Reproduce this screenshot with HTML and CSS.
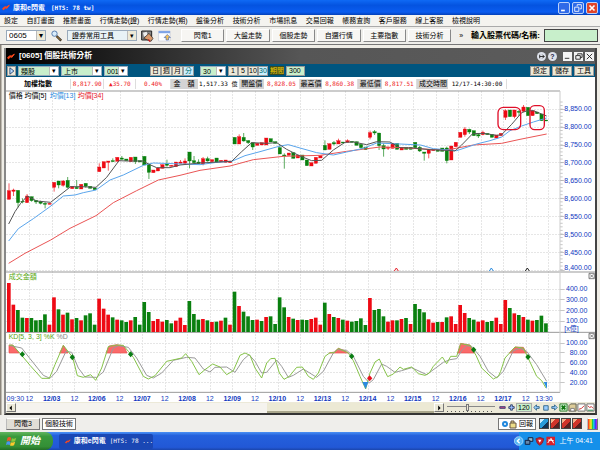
FILE: index.html
```html
<!DOCTYPE html>
<html lang="zh-Hant">
<head>
<meta charset="utf-8">
<title>康和e閃電</title>
<link rel="stylesheet" href="styles.css">
</head>
<body>
<header class="titlebar">
  <svg class="bolt" viewBox="0 0 24 20"><path d="M2 13 L10 7 L11 10 L22 3 L14 13 L12 10 L4 17 Z"/></svg>
  <h1>康和e閃電<span class="code">[HTS: 78 tw]</span></h1>
  <div class="winbtns">
    <button type="button" aria-label="最小化"><svg viewBox="0 0 12 12"><path d="M2.500 9H7"/></svg></button>
    <button type="button" aria-label="還原"><svg viewBox="0 0 12 12"><path class="thin" d="M5 4V2H10V7H8M2 5H7V10H2Z"/></svg></button>
    <button type="button" class="close" aria-label="關閉"><svg viewBox="0 0 12 12"><path d="M3 3L9 9M9 3L3 9"/></svg></button>
  </div>
</header>
<nav class="menubar">
  <a href="#">設定</a><a href="#">自訂畫面</a><a href="#">推薦畫面</a><a href="#">行情走勢(證)</a><a href="#">行情走勢(期)</a><a href="#">盤後分析</a><a href="#">技術分析</a><a href="#">市場訊息</a><a href="#">交易回報</a><a href="#">帳務查詢</a><a href="#">客戶服務</a><a href="#">線上客服</a><a href="#">檢視說明</a>
</nav>
<div class="toolbar">
  <span class="combo code-box"><select aria-label="代碼"><option>0605</option></select></span>
  <button type="button" class="ico" aria-label="查詢"><svg viewBox="0 0 36 36"><path d="M18 18L32 32" stroke="#222" stroke-width="7"/><path d="M19 19L31 31" stroke="#d99a3c" stroke-width="3"/><circle cx="12" cy="11" r="8" fill="#d8ecfb" stroke="#5a7fae" stroke-width="3"/></svg></button>
  <span class="combo tools"><select aria-label="工具"><option>證券常用工具</option></select></span>
  <button type="button" class="ico" aria-label="繪圖"><svg viewBox="0 0 39 36"><path d="M2 3H32V30H2Z" fill="#888" stroke="#222" stroke-width="3"/><path d="M6 8L17 5L20 16L9 20Z" fill="#eee"/><path d="M8 25L24 10L36 25L30 34Z" fill="#d99a6c" stroke="#222" stroke-width="2"/><path d="M22 28L27 35" stroke="#c22" stroke-width="4"/></svg></button>
  <button type="button" class="ico" aria-label="視窗"><svg viewBox="0 0 42 36"><path d="M2 2H39V34H2Z" fill="#fff" stroke="#8894b8"/><path d="M2 2H39V9H2Z" fill="#7fa4e6"/><path d="M30 13L40 23H34V31H26V23H20Z" fill="#f5c258" stroke="#3d62b5" stroke-width="2"/></svg></button>
  <div class="quick">
    <button type="button">閃電1</button><button type="button">大盤走勢</button><button type="button">個股走勢</button><button type="button">自選行情</button><button type="button">主要指數</button><button type="button">技術分析</button>
  </div>
  <span class="more">»</span>
  <label class="find" for="stock">輸入股票代碼/名稱:</label>
  <input id="stock" class="stock" type="text">
</div>

<main class="workspace">
  <section class="chartwin">
    <header class="wintitle">
      <svg class="bolt" viewBox="0 0 24 20"><path d="M2 13 L10 7 L11 10 L22 3 L14 13 L12 10 L4 17 Z"/></svg>
      <h2>[0605] 個股技術分析</h2>
      <button type="button" class="round" aria-label="鎖定"><svg viewBox="0 0 10 10"><path d="M3 5H8M6 3L8 5L6 7M3 3V7"/></svg></button>
      <button type="button" class="round">?</button>
      <button type="button" class="sq first" aria-label="最小化"><svg viewBox="0 0 10 10"><path d="M2 7H7"/></svg></button>
      <button type="button" class="sq" aria-label="還原"><svg viewBox="0 0 10 10"><path d="M4 3V2H9V6H7M2 4H7V8H2Z"/></svg></button>
      <button type="button" class="sq" aria-label="關閉"><svg viewBox="0 0 10 10"><path d="M2 2L8 8M8 2L2 8"/></svg></button>
    </header>
    <div class="options">
      <button type="button" class="play" aria-label="播放"><svg viewBox="0 0 8 10"><path d="M2 1L7 5L2 9Z"/></svg></button>
      <span class="combo green"><select aria-label="類別"><option>類股</option></select></span>
      <span class="combo green"><select aria-label="市場"><option>上市</option></select></span>
      <span class="combo green small"><select aria-label="代號"><option>001</option></select></span>
      <div class="period">
        <button type="button">日</button><button type="button">週</button><button type="button">月</button><button type="button" class="on">分</button>
      </div>
      <span class="combo green mins"><select aria-label="分鐘"><option>30</option></select></span>
      <div class="steps">
        <button type="button">1</button><button type="button">5</button><button type="button">10</button><button type="button" class="on">30</button>
      </div>
      <label class="span" for="span">期間</label>
      <input id="span" class="spanbox" type="text" value="300">
      <div class="actions">
        <button type="button">設定</button><button type="button">儲存</button><button type="button">工具</button>
      </div>
    </div>
    <div class="quote">
      <b>加權指數</b><span class="num up">8,817.90</span><span class="num up">▲35.70</span><span class="num up">0.40%</span>
      <span class="cap">金　額</span><span class="num">1,517.33 億</span>
      <span class="cap">開盤價</span><span class="num up">8,828.05</span>
      <span class="cap">最高價</span><span class="num up">8,860.38</span>
      <span class="cap">最低價</span><span class="num up">8,817.51</span>
      <span class="cap">成交時間</span><span class="num">12/17-14:30:00</span>
    </div>
    <svg class="chart" viewBox="18 270 1767 936" role="img" aria-label="技術分析圖">
      <g id="grid"></g>
      <g class="frame">
        <path d="M18 273H1680M18 816H1785M18 997H1785M18 1177H1680"/>
        <path class="edge" d="M1680 273V1177"/>
      </g>
      <text class="legend" x="26" y="295">價格 均價[5] <tspan fill="#2a8be0" x="149">均價[13]</tspan> <tspan fill="#e8202a" x="233">均價[34]</tspan></text>
      <g transform="translate(0 270)">
        <g id="candles"></g>
        <polyline class="ma34" points="26,520 75,490 152,450 210,415 288,377 340,338 410,302 475,270 540,256 600,241 690,228 760,209 850,199 960,196 1040,184 1140,171 1200,173 1290,178 1340,180 1420,165 1505,160 1560,148 1640,132"/>
        <polyline class="ma13" points="26,453 55,416 100,386 150,350 190,318 225,315 250,308 288,300 330,270 370,255 430,226 460,219 520,221 600,224 650,217 695,214 735,197 780,185 840,168 865,164 900,174 950,188 1000,195 1040,186 1090,175 1130,159 1200,162 1262,165 1300,176 1370,182 1430,162 1470,152 1505,141 1530,122 1565,108 1600,96 1640,84"/>
        <polyline class="ma5" points="26,402 45,365 62,340 82,318 110,333 152,337 180,315 212,290 240,290 288,292 320,262 357,212 380,213 430,213 445,222 470,233 510,233 540,225 600,219 695,214 725,185 755,158 800,160 830,158 860,178 900,198 935,212 965,211 1000,180 1035,157 1060,156 1100,164 1130,155 1170,156 1200,173 1240,174 1290,179 1340,181 1365,183 1385,165 1418,131 1450,130 1490,136 1505,134 1535,103 1565,68 1580,63 1600,62 1620,70 1640,78"/>
        <rect class="ring" x="1494" y="52" width="68" height="67" rx="16"/>
        <rect class="ring" x="1590" y="47" width="43" height="72" rx="14"/>
        <path class="tick" stroke="#e8202a" d="M1183 543l6 -9l6 9"/>
        <path class="tick" stroke="#2a8be0" d="M1468 543l6 -9l6 9"/>
        <path class="tick" stroke="#222" d="M1576 543l6 -9l6 9"/>
      </g>
      <text class="legend" x="26" y="837" fill="#5aa810">成交金額</text>
      <g id="volume"></g>
      <text class="legend" x="26" y="1018" fill="#5aa810">KD[5, 3, 3] %K <tspan fill="#888">%D</tspan></text>
      <g transform="translate(0 804)">
        <path class="hot" d="M27 255V231H38L58 255ZM179 255L190 232L204 255ZM318 255L327 234L350 230L372 234L381 255ZM988 255L1003 252L1015 241L1032 247L1045 255ZM1373 255L1382 226L1410 231L1424 255ZM1528 255L1545 237L1570 238L1580 255Z"/>
        <polyline class="d" points="27,232 65,240 90,272 130,322 150,331 170,310 198,250 215,253 235,300 255,327 290,328 310,312 340,240 355,233 385,238 410,270 440,322 460,330 485,315 520,277 560,268 585,270 610,303 630,312 645,298 680,297 705,313 730,275 747,260 765,280 785,315 800,313 830,276 845,295 865,328 880,322 910,303 950,328 970,310 1000,255 1012,245 1040,247 1060,265 1090,325 1108,345 1120,335 1145,288 1160,295 1185,313 1205,308 1235,299 1280,320 1330,283 1350,275 1370,272 1385,248 1400,233 1415,235 1440,265 1465,310 1490,330 1510,310 1540,248 1560,241 1580,250 1610,290 1640,340"/>
        <polyline class="k" points="27,232 38,231 65,262 90,292 125,331 148,331 165,290 190,232 218,268 232,323 250,328 272,320 287,337 305,300 325,236 350,231 370,232 385,250 400,268 430,325 445,333 465,323 500,280 545,270 557,257 575,280 597,320 615,305 638,288 660,297 680,320 700,308 720,262 735,255 750,262 765,300 785,330 800,285 812,272 825,271 838,315 852,334 868,325 890,298 907,297 925,325 940,334 955,315 975,265 990,254 1003,254 1015,241 1045,255 1060,278 1080,325 1097,363 1110,315 1125,282 1138,273 1150,300 1163,326 1180,318 1200,297 1210,304 1235,297 1255,317 1275,322 1288,315 1300,295 1327,267 1340,287 1352,265 1370,265 1382,227 1410,232 1428,262 1445,300 1480,333 1495,325 1502,310 1515,270 1545,237 1570,240 1590,282 1610,325 1625,338 1638,360"/>
        <path fill="#0a7d14" d="M67 250l8 9l-8 9l-8 -9ZM217 259l8 9l-8 9l-8 -9ZM392 250l8 9l-8 9l-8 -9ZM1055 256l8 9l-8 9l-8 -9ZM1421 236l8 9l-8 9l-8 -9ZM1584 258l8 9l-8 9l-8 -9Z"/>
        <path fill="#e81020" d="M1109 322l8 9l-8 9l-8 -9Z"/>
        <path fill="#2a8be0" d="M1087 342H1105L1097 363ZM1631 342H1641V363Z"/>
      </g>
      <g class="shut">
        <path d="M1767 820h16v16h-16ZM1770 823l10 10M1780 823l-10 10M1767 1000h16v16h-16ZM1770 1003l10 10M1780 1003l-10 10"/>
      </g>
      <g id="labels"></g>
    </svg>
    <div class="controls">
      <button type="button" class="arrow" aria-label="向左"><svg viewBox="0 0 10 10"><path d="M6 2V8L3 5Z"/></svg></button>
      <div class="track"><div class="thumb"></div></div>
      <button type="button" class="arrow" aria-label="向右"><svg viewBox="0 0 10 10"><path d="M4 2V8L7 5Z"/></svg></button>
      <input class="zoom" type="range" min="0" max="100" value="42" aria-label="縮放">
      <div class="keys">
        <button type="button" aria-label="減少"><svg viewBox="0 0 10 10"><path d="M2 4H8V6H2Z" fill="#b48" stroke="#447"/></svg></button>
        <button type="button" aria-label="增加"><svg viewBox="0 0 10 10"><path d="M4 2H6V4H8V6H6V8H4V6H2V4H4Z" fill="#9bf" stroke="#346"/></svg></button>
        <input class="count" type="text" value="120" aria-label="筆數">
        <button type="button" aria-label="左移"><svg viewBox="0 0 10 10"><path d="M2 5L5 2V4H8V6H5V8Z" fill="#9cf" stroke="#368"/></svg></button>
        <button type="button" aria-label="停止"><svg viewBox="0 0 10 10"><path d="M3 3H8V8H3Z" fill="#9cf" stroke="#368"/></svg></button>
        <button type="button" aria-label="右移"><svg viewBox="0 0 10 10"><path d="M8 5L5 2V4H2V6H5V8Z" fill="#9cf" stroke="#368"/></svg></button>
        <button type="button" aria-label="匯出"><svg viewBox="0 0 10 10"><path d="M1 1H9V9H1Z" fill="#cec" stroke="#272"/><path d="M3 3L7 7M7 3L3 7" stroke="#171" stroke-width="2"/></svg></button>
        <button type="button" aria-label="儲存圖"><svg viewBox="0 0 10 10"><path d="M1 3L3 1H9V9H1Z" fill="#dc9" stroke="#554"/><path d="M3 6H7V9H3Z" fill="#fff" stroke="#777"/></svg></button>
        <button type="button" aria-label="線圖"><svg viewBox="0 0 10 10"><path d="M1 1H9V9H1Z" fill="#fff" stroke="#666"/><path d="M2 7L5 6L8 3" stroke="#c22" fill="none"/></svg></button>
        <button type="button" aria-label="指標"><svg viewBox="0 0 10 10"><path d="M1 1H9V9H1Z" fill="#fff" stroke="#666"/><path d="M2 3L4 5L6 4L8 6" stroke="#c22" fill="none"/><path d="M2 8H8" stroke="#284"/></svg></button>
      </div>
    </div>
  </section>
</main>

<div class="tabs">
  <button type="button">閃電3</button>
  <button type="button" class="on">個股技術</button>
  <button type="button" class="report"><svg viewBox="0 0 16 10"><circle cx="4" cy="5" r="3" fill="#28d"/><circle cx="4" cy="5" r="1" fill="#fff"/><path d="M10 4V2H13V4M9 4H15V9H9Z" fill="#ed8" stroke="#654"/></svg>回報</button>
  <div class="flags">
    <button type="button" class="a" aria-label="快捷一"></button><button type="button" aria-label="快捷二"></button><button type="button" aria-label="快捷三"></button><button type="button" aria-label="快捷四"></button>
  </div>
  <button type="button" class="rainbow" aria-label="配色"></button>
</div>
<footer class="taskbar">
  <button type="button" class="start"><svg viewBox="0 0 30 28"><path d="M4 4Q9 0 14 4L12 13Q7 10 2 13Z" fill="#f0592a"/><path d="M16 5Q22 8 28 4L25 13Q19 16 14 14Z" fill="#8cc63e"/><path d="M2 15Q7 12 12 15L10 24Q5 21 0 24Z" fill="#4a94f0"/><path d="M13 16Q19 18 25 15L22 24Q16 27 11 25Z" fill="#fbc92e"/></svg>開始</button>
  <button type="button" class="task"><svg class="bolt" viewBox="0 0 24 20"><path d="M2 13 L10 7 L11 10 L22 3 L14 13 L12 10 L4 17 Z"/></svg>康和e閃電<span class="code">[HTS: 78 ...</span></button>
  <div class="tray">
    <svg viewBox="0 0 130 30"><circle cx="14" cy="15" r="13" fill="#55b5f5" stroke="#cbe9ff" stroke-width="2"/><path d="M17 8L10 15L17 22" fill="none" stroke="#fff" stroke-width="4"/><path d="M43 5H57V16H43Z" fill="#9bc" stroke="#124" stroke-width="3"/><path d="M34 13H48V25H34Z" fill="#68a" stroke="#124" stroke-width="3"/><path d="M66 8L78 4L90 8Q88 24 78 28Q68 24 66 8Z" fill="#c81e2c" stroke="#722" stroke-width="2"/><path d="M73 11H83L78 20Z" fill="#fff"/><path d="M98 2H124V28H98Z" fill="#d8202a"/><path d="M102 21L112 7L120 22M103 12L120 14" fill="none" stroke="#fff" stroke-width="3"/></svg>
    <time>上午 04:41</time>
  </div>
</footer>
<script src="chart.js"></script>
</body>
</html>
```
FILE: styles.css
```css
* { box-sizing: border-box; }

body {
  margin: 0;
  min-height: 100vh;
  display: flex;
  flex-direction: column;
  background: #ece9e0;
  color: #000;
  font: 7px/10px "Liberation Sans", "Noto Sans CJK TC", sans-serif;
}

button, input, select {
  margin: 0;
  padding: 0;
  font: inherit;
  color: inherit;
  border: 1px solid #999;
  border-radius: 0;
  background: #ece9d8;
}

h1, h2 { margin: 0; font: inherit; font-weight: bold; white-space: nowrap; }
svg { display: block; }
a { color: inherit; text-decoration: none; }
.code { font-family: "DejaVu Sans Mono", monospace; font-size: 6px; }
.bolt { width: 8px; height: 7px; fill: #ff4a1c; stroke: #ff4a1c; stroke-width: 3; }

/* application title */
.titlebar {
  display: flex;
  align-items: center;
  height: 15px;
  padding: 0 2px;
  gap: 3px;
  color: #fff;
  background: linear-gradient(#0f6af5, #0453e0 35%, #0a5cf0 80%, #0340b8);
}
.titlebar .code { margin-left: 6px; }
.winbtns { display: flex; gap: 2px; margin-left: auto; }
.winbtns button {
  width: 12px;
  height: 12px;
  border: 1px solid #b9d0fa;
  border-radius: 2px;
  background: #2f6ae8;
}
.winbtns .close { background: #e0452a; }
.winbtns path { fill: none; stroke: #fff; stroke-width: 2; }
.winbtns .thin { stroke-width: 1; }

.menubar {
  display: flex;
  justify-content: space-between;
  align-items: center;
  height: 12px;
  padding: 0 20% 0 4px;
  background: #f4f3ef;
  border-bottom: 1px solid #aaa;
  white-space: nowrap;
}

.toolbar {
  display: flex;
  align-items: center;
  height: 18px;
  padding: 0 2px 0 6px;
  gap: 4px;
  background: #efeeea;
  border-bottom: 1px solid #777;
}
.combo { position: relative; display: flex; flex: none; height: 11px; }
.combo select {
  width: 100%;
  padding-left: 2px;
  border: 1px solid #9ab;
  background: #fff;
  appearance: none;
}
.combo::after {
  content: "▾";
  position: absolute;
  right: 1px;
  top: 1px;
  bottom: 1px;
  width: 8px;
  line-height: 9px;
  text-align: center;
  background: #ece9d8;
  border: 1px solid #bbb;
  border-width: 0 0 0 1px;
  pointer-events: none;
}
.code-box { width: 40px; font-size: 8px; }
.tools { width: 70px; }
.tools select { padding-left: 4px; background: #e8f2f6; }
.ico { border: 0; background: none; }
.ico svg { width: 13px; height: 12px; }
.quick { display: flex; flex: 1; gap: 2px; padding-left: 6px; }
.quick button {
  flex: 1;
  height: 13px;
  white-space: nowrap;
  background: #f7f6f3;
  border-color: #fff #888 #888 #fff;
}
.more { padding: 0 4px; }
.find { font-size: 8px; font-weight: bold; white-space: nowrap; background: #f2f0dc; }
.stock { width: 54px; height: 13px; border: 1px solid #444; background: #c8efcb; }

/* chart window */
.workspace {
  flex: 1;
  padding: 3px 3px 0 4px;
  background: linear-gradient(90deg, #8b857b 1px, #efede6 2px);
}
.chartwin {
  border: solid #777;
  border-width: 0 2px 2px;
  border-color: #333 #444 #333 #888;
  background: #fff;
}
.wintitle {
  display: flex;
  align-items: center;
  gap: 2px;
  height: 16px;
  padding: 0 1px;
  color: #fff;
  background: linear-gradient(90deg, #000, #565656 50%, #5c5c5c);
}
.wintitle h2 { flex: 1; padding-left: 2px; font-size: 8px; }
.round { width: 9px; height: 9px; border: 0; border-radius: 50%; background: #dde1ea; color: #224; line-height: 9px; font-weight: bold; }
.sq { width: 9px; height: 9px; border: 0; background: #f4f4f4; }
.sq.first { margin-left: 4px; }
.wintitle button path { fill: none; stroke: #222; }

.options {
  display: flex;
  align-items: center;
  gap: 2px;
  height: 13px;
  padding: 0 1px;
  background: #00557f;
}
.options button { height: 10px; line-height: 8px; }
.play { width: 9px; }
.play svg { width: 7px; height: 8px; }
.play path { fill: #bdf; stroke: #136; }
.options .combo { width: 41px; height: 10px; }
.options .combo::after { line-height: 8px; background: #fff; }
.green select { background: #c8efcb; }
.options .small { width: 24px; }
.options .mins { width: 26px; }
.period { display: flex; padding: 0 4px 0 20px; }
.period button { width: 11px; }
.steps { display: flex; }
.steps button { width: 10px; }
.options .on { background: #c9efff; color: #066; }
.span { color: #f2d000; background: #3a4a20; line-height: 9px; }
.spanbox { width: 19px; height: 10px; padding-left: 2px; background: #c8efcb; }
.actions { display: flex; gap: 2px; margin-left: auto; }
.actions button { width: 20px; }

.quote {
  display: grid;
  grid-template-columns: 65fr 33fr 32fr 34fr 27fr 42fr 24fr 36fr 22fr 36fr 24fr 35fr 31fr 58fr;
  width: 85%;
  height: 13px;
  align-items: center;
  text-align: center;
  white-space: nowrap;
}
.quote > * { border-right: 1px solid #ddd; }
.quote .cap { background: #d4d4d4; border: 0; }
.num { font-family: "DejaVu Sans Mono", "Noto Sans CJK TC", monospace; font-size: 6px; }
.up { color: #ee1c25; }

.chart { width: 100%; height: auto; font-size: 21px; }
.chart .g { stroke: #e6e6e6; stroke-width: 3; stroke-dasharray: 6 3; fill: none; }
.frame { fill: none; stroke: #999; stroke-width: 3; }
.frame .edge { stroke: #ccc; }
.scale { stroke: #aaa; stroke-width: 2; }
.axis { fill: #1038c0; }
.axis.day { font-weight: bold; text-anchor: middle; }
.axis.mid { text-anchor: middle; }
.chart polyline { fill: none; stroke-width: 3; }
.ma5 { stroke: #555; }
.ma13 { stroke: #5aa5ec; }
.ma34 { stroke: #ea5555; }
.k { stroke: #86c34a; }
.d { stroke: #9a9a9a; }
.r { fill: #ee0a14; stroke: #ee0a14; }
.v { fill: #0a800f; stroke: #0a800f; }
.ring { fill: none; stroke: #e0102a; stroke-width: 4; }
.tick { fill: none; stroke-width: 3; }
.hot { fill: #fa6a6a; stroke: #e84a4a; stroke-width: 2; }
.shut path { fill: none; stroke: #444; stroke-width: 2; }

.controls { display: flex; align-items: center; height: 11px; background: #ece9d8; }
.controls button { flex: none; width: 9px; height: 9px; border: 0; background: none; }
.controls .arrow { width: 10px; border: 1px solid; border-color: #fff #777 #777 #fff; background: #ece9d8; }
.track { display: flex; flex: 1; height: 10px; background: #f5f3ee; }
.thumb { margin-left: 60%; flex: 1; background: #ece9d4; border-bottom: 2px solid #a9a68c; }
.zoom {
  width: 48px;
  height: 10px;
  margin: 0 3px;
  border: 0;
  appearance: none;
  background:
    linear-gradient(#888, #888) 0 3px / 100% 1px no-repeat,
    repeating-linear-gradient(90deg, #555 0 1px, transparent 1px 4px) 0 8px / 100% 1px no-repeat;
}
.zoom::-webkit-slider-thumb { appearance: none; width: 3px; height: 7px; background: #ece9d8; border: 1px solid #777; }
.keys { display: flex; align-items: center; }
.keys svg { width: 9px; height: 9px; }
.keys .count { width: 16px; height: 9px; padding-left: 1px; border: 1px solid #aaa; background: #c8efcb; }

.tabs {
  display: flex;
  align-items: center;
  gap: 2px;
  height: 17px;
  padding: 0 2px 0 6px;
  background: #efeeeb;
}
.tabs button { height: 12px; min-width: 34px; white-space: nowrap; line-height: 10px; }
.tabs > button { background: #e0ded6; border-color: #fff #777 #777 #bbb; }
.tabs .on { background: #fff; border-color: #777; }
.tabs .report { display: flex; align-items: center; gap: 2px; margin-left: auto; padding: 0 2px; background: #fff; border-color: #777; }
.report svg { width: 16px; height: 10px; }
.flags { display: flex; gap: 1px; padding: 0 3px 0 1px; }
.flags button {
  width: 10px;
  min-width: 0;
  height: 11px;
  border: 1px solid #444;
  background: linear-gradient(135deg, #f5b08c 25%, #d0342a 25% 60%, #5a2020 60%);
}
.flags .a { background: linear-gradient(135deg, #cfefff 25%, #2a9bd8 25% 60%, #135 60%); }
.tabs .rainbow {
  width: 11px;
  min-width: 0;
  background: linear-gradient(90deg, #e22, #fa2 20%, #fe2 35%, #2c4 50%, #2cf 65%, #24e 80%, #c2e);
}

.taskbar {
  display: flex;
  align-items: center;
  height: 18px;
  color: #fff;
  background: linear-gradient(#4a90f4, #2460dc 20%, #2258d6 85%, #1a45ac);
}
.start {
  display: flex;
  align-items: center;
  gap: 3px;
  width: 53px;
  height: 18px;
  padding-left: 6px;
  border: 0;
  border-radius: 0 8px 8px 0;
  font-size: 10px;
  font-style: italic;
  font-weight: bold;
  background: linear-gradient(#62b560, #3a9a3c 25%, #348f36 80%, #226e26);
}
.start svg { width: 11px; height: 11px; }
.task {
  display: flex;
  align-items: center;
  gap: 3px;
  width: 94px;
  height: 15px;
  margin-left: 6px;
  padding-left: 6px;
  border: 0;
  border-radius: 2px;
  background: #1a47b4;
  font-weight: bold;
  white-space: nowrap;
}
.task .code { font-weight: normal; margin-left: 1px; }
.tray {
  display: flex;
  align-items: center;
  gap: 3px;
  height: 18px;
  margin-left: auto;
  padding: 0 7px 0 0;
  background: linear-gradient(90deg, transparent 5px, #1590ea 5px);
  white-space: nowrap;
}
.tray svg { width: 43px; height: 10px; }
```
FILE: chart.js
```js
const NS = "http://www.w3.org/2000/svg";
const STEP = 13.54;
const X0 = 27;

function add(parent, tag, attrs, text) {
  const el = document.createElementNS(NS, tag);
  for (const key in attrs) el.setAttribute(key, attrs[key]);
  if (text) el.textContent = text;
  document.getElementById(parent).appendChild(el);
}

// colour, body top, body bottom, high, low
const candles = `r302 328 280 328,r300 304 296 318,v301 338 301 352,v334 336 325 340,r318 338 312 338,v320 332 320 335,v331 336 331 342,v335 340 332 343,v340 343 336 355,r340 343,
r277 292 277 305,v273 285 273 295,r273 286 270 290,v271 292 261 295,r289 296,v292 296 270 296,r283 297,v280 289 280 293,v289 295,v294 299,
r231 245 220 245,r215 234,r213 217 213 242,v212 215 205 215,r202 214,v204 208 198 208,v207 212,r202 215,v201 215 201 222,v212 216,
v199 225,v224 247 220 267,r240 248,r234 243,r224 235,v221 226 209 230,r226 229,r216 230,r216 220 210 220,r213 220 205 222,
v186 213 186 235,v212 218 198 222,v216 221 208 222,r206 222 201 226,v206 213 200 215,r209 215,v204 217,r211 216,r210 217,r213 218,
v142 162,r140 162 133 162,v142 153 129 155,v152 158 150 162,v158 171 158 180,r160 166,r158 165,r144 165,v146 156,v155 160,
v173 192 165 192,v195 198 190 236,r189 196,v188 205,r195 204,v195 210,v210 227,r218 228,r202 220,r197 204,
v166 180 151 180,r161 178,v158 162 153 166,r152 162 146 162,v156 159,r152 157 148 157,v154 157,v155 166,v163 173 163 178,v171 179,
r128 142 122 148,v125 129 120 135,v129 167 129 180,v167 177 160 200,r171 175 170 180,r160 175,v160 178,r172 180,v172 178,v172 178,
v157 173,v172 183 168 186,v186 190 186 212,r180 190 178 205,r178 182,v178 184,v174 184,v174 212 170 220,r168 210,r157 170,
r127 142,r117 134 111 140,v118 126 116 132,v122 137,v134 138 130 144,r127 134 122 136,v130 134,v133 142,r135 144,r130 137,
r62 82 58 90,v60 80,r60 80 60 85,v64 67 60 78,r51 64 45 66,v52 77,r62 77,v66 71,v72 92,v90 93`;

const volume = `r45 r110 v126 v149 r150 v150 v157 v156 v139 r170 r88 v124 r140 v134 r154 v150 r157 v142 v136 v170
r92 r122 r140 v148 r155 v157 v162 r157 v147 v170 v102 v132 r159 r153 r161 v156 v166 r158 r149 r171
v99 v138 v155 r153 v157 r162 v161 r158 v149 r170 v71 r114 v131 v145 v156 r155 v159 r147 v145 v168
v88 v118 r147 v152 r156 v155 v156 r153 r149 r170 v104 r138 v147 r150 v155 r158 v161 v159 v151 v171
r90 v126 v123 v145 r161 r157 v157 r153 v150 r168 v108 v123 v133 r154 r164 v162 r162 v148 r145 r168
r111 r135 v150 v155 r161 r157 v162 v159 r149 r168 r96 v120 r136 v141 r147 v155 r158 v156 v143 v166`;

// grid
for (let i = 0; i < 24; i++) {
  const x = Math.round((X0 + STEP * (4.5 + 5 * i)) / 3) * 3 + 1.5;
  if (x < 1660) add("grid", "path", { class: "g", d: `M${x} 273V1177` });
}
const rows = [328, 381, 435, 487, 541, 595, 649, 703, 757, 811, 867, 898, 931, 963, 1029, 1058, 1087, 1117, 1147];
for (const row of rows) {
  const y = Math.floor(row / 3) * 3 + 1.5;
  add("grid", "path", { class: "g", d: `M18 ${y}H1680` });
  add("grid", "path", { class: "scale", d: `M1680 ${y}h14` });
}
for (let y = 306; y < 811; y += 10.7) add("grid", "path", { class: "scale", d: `M1680 ${y}h8` });

candles.split(",").forEach((item, i) => {
  const s = item.trim();
  const [top, bottom, high = top, low = bottom] = s.slice(1).split(" ").map(Number);
  const x = X0 + STEP * i;
  add("candles", "path", { class: s[0], "stroke-width": 2, d: `M${x} ${high}V${low}` });
  add("candles", "rect", { class: s[0], "stroke-width": 1, x: x - 5, y: top, width: 10, height: bottom - top });
});

volume.split(/\s+/).forEach((s, i) => {
  const top = Number(s.slice(1));
  add("volume", "rect", { class: s[0], "stroke-width": 0, x: X0 + STEP * i - 6, y: 804 + top, width: 11, height: 192 - top });
});

// price, volume and KD scales
for (let i = 0; i < 10; i++) {
  const price = `8,${850 - i * 50}.00`;
  add("labels", "text", { class: "axis", x: 1693, y: i === 9 ? 810 : 334 + i * 53.7 }, price);
}
[400, 300, 200, 100].forEach((n, i) => add("labels", "text", { class: "axis", x: 1698, y: 874 + i * 32 }, `${n}.00`));
add("labels", "text", { class: "axis", x: 1693, y: 992 }, "[x億]");
[100, 80, 60, 40, 20].forEach((n, i) => add("labels", "text", { class: "axis", x: n === 100 ? 1698 : 1709, y: 1036 + i * 29.5 }, `${n}.00`));

// time axis
add("labels", "text", { class: "axis mid", x: 46, y: 1204 }, "09:30");
["12/03", "12/06", "12/07", "12/08", "12/09", "12/10", "12/13", "12/14", "12/15", "12/16", "12/17"].forEach((day, i) => {
  add("labels", "text", { class: "axis mid", x: 88 + i * 135.4, y: 1204 }, "12");
  add("labels", "text", { class: "axis day", x: 155 + i * 135.4, y: 1204 }, day);
});
add("labels", "text", { class: "axis mid", x: 1577, y: 1204 }, "12");
add("labels", "text", { class: "axis mid", x: 1632, y: 1204 }, "13:30");
```
